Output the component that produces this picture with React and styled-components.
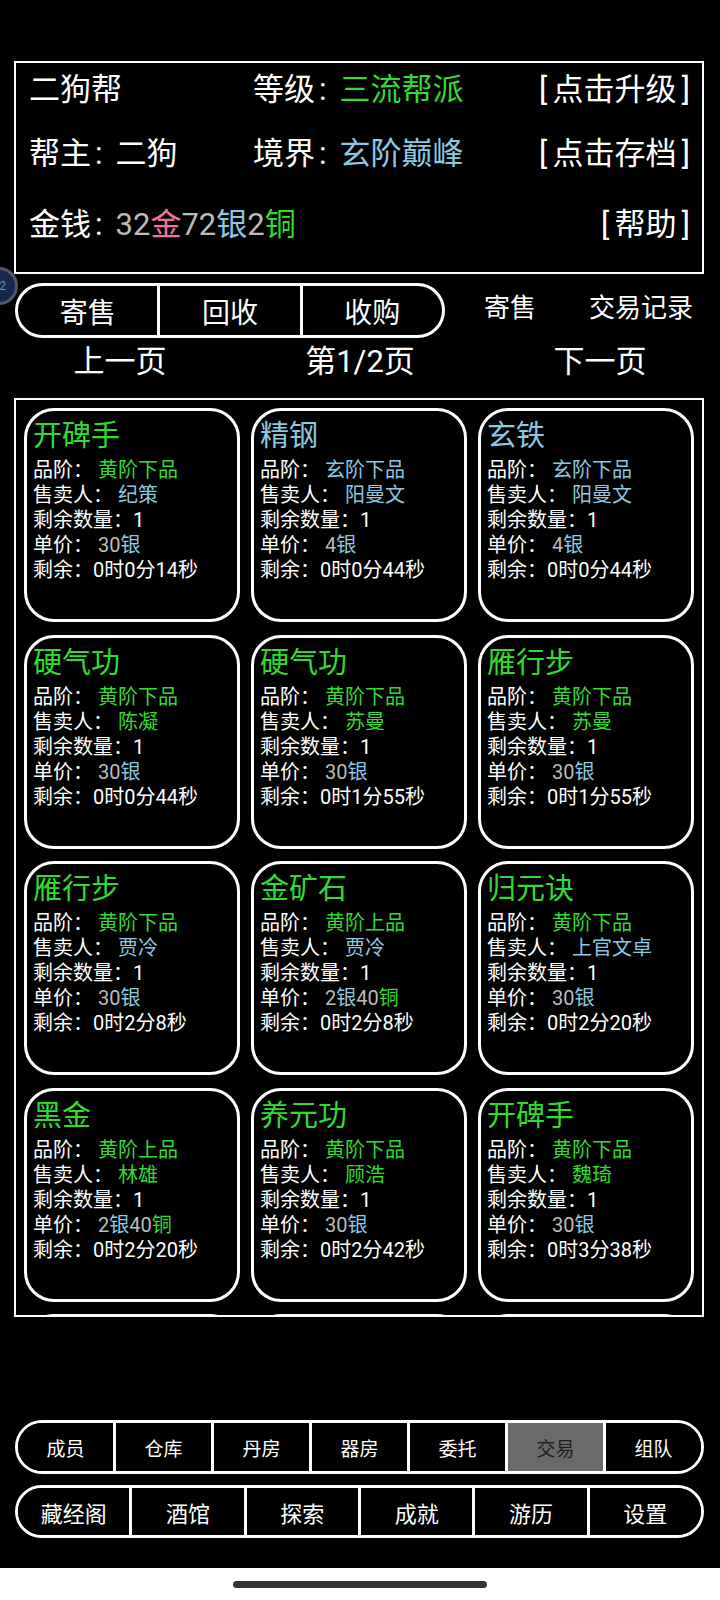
import React from 'react';
import styled, { createGlobalStyle } from 'styled-components';

const GREEN = '#30dc30';
const BLUE = '#8ec8e2';
const GREY = '#bcbcbc';
const PINK = '#f0749a';

const items = [
    { name: '开碑手', nc: GREEN, grade: '黄阶下品', gc: GREEN, seller: '纪策', sc: BLUE, price: [['30', GREY], ['银', BLUE]], left: '0时0分14秒' },
    { name: '精钢', nc: BLUE, grade: '玄阶下品', gc: BLUE, seller: '阳曼文', sc: BLUE, price: [['4', GREY], ['银', BLUE]], left: '0时0分44秒' },
    { name: '玄铁', nc: BLUE, grade: '玄阶下品', gc: BLUE, seller: '阳曼文', sc: BLUE, price: [['4', GREY], ['银', BLUE]], left: '0时0分44秒' },
    { name: '硬气功', nc: GREEN, grade: '黄阶下品', gc: GREEN, seller: '陈凝', sc: GREEN, price: [['30', GREY], ['银', BLUE]], left: '0时0分44秒' },
    { name: '硬气功', nc: GREEN, grade: '黄阶下品', gc: GREEN, seller: '苏曼', sc: GREEN, price: [['30', GREY], ['银', BLUE]], left: '0时1分55秒' },
    { name: '雁行步', nc: GREEN, grade: '黄阶下品', gc: GREEN, seller: '苏曼', sc: GREEN, price: [['30', GREY], ['银', BLUE]], left: '0时1分55秒' },
    { name: '雁行步', nc: GREEN, grade: '黄阶下品', gc: GREEN, seller: '贾冷', sc: BLUE, price: [['30', GREY], ['银', BLUE]], left: '0时2分8秒' },
    { name: '金矿石', nc: GREEN, grade: '黄阶上品', gc: GREEN, seller: '贾冷', sc: BLUE, price: [['2', GREY], ['银', BLUE], ['40', GREY], ['铜', GREEN]], left: '0时2分8秒' },
    { name: '归元诀', nc: GREEN, grade: '黄阶下品', gc: GREEN, seller: '上官文卓', sc: BLUE, price: [['30', GREY], ['银', BLUE]], left: '0时2分20秒' },
    { name: '黑金', nc: GREEN, grade: '黄阶上品', gc: GREEN, seller: '林雄', sc: GREEN, price: [['2', GREY], ['银', BLUE], ['40', GREY], ['铜', GREEN]], left: '0时2分20秒' },
    { name: '养元功', nc: GREEN, grade: '黄阶下品', gc: GREEN, seller: '顾浩', sc: GREEN, price: [['30', GREY], ['银', BLUE]], left: '0时2分42秒' },
    { name: '开碑手', nc: GREEN, grade: '黄阶下品', gc: GREEN, seller: '魏琦', sc: GREEN, price: [['30', GREY], ['银', BLUE]], left: '0时3分38秒' },
    { name: '精钢', nc: BLUE, grade: '玄阶下品', gc: BLUE, seller: '阳曼文', sc: BLUE, price: [['4', GREY], ['银', BLUE]], left: '0时3分50秒' },
    { name: '玄铁', nc: BLUE, grade: '玄阶下品', gc: BLUE, seller: '阳曼文', sc: BLUE, price: [['4', GREY], ['银', BLUE]], left: '0时3分50秒' },
    { name: '硬气功', nc: GREEN, grade: '黄阶下品', gc: GREEN, seller: '苏曼', sc: GREEN, price: [['30', GREY], ['银', BLUE]], left: '0时4分2秒' },
]

const navTop = ['成员', '仓库', '丹房', '器房', '委托', '交易', '组队']
const navBottom = ['藏经阁', '酒馆', '探索', '成就', '游历', '设置']

// bracketed actions in the header have slightly loose brackets
const Action = ({ children }) => <span>[{'\u2006'}{children}{'\u2006'}]</span>

const App = () => {
    return (
        <Screen>
            <GlobalStyle />
            <Badge>22</Badge>
            <Main>
                <InfoBox>
                    <InfoRow $top={7}>
                        <span>二狗帮</span>
                        <span>等级<Colon>:</Colon><Tone $c={GREEN}>三流帮派</Tone></span>
                        <Action>点击升级</Action>
                    </InfoRow>
                    <InfoRow $top={24}>
                        <span>帮主<Colon>:</Colon>二狗</span>
                        <span>境界<Colon>:</Colon><Tone $c={BLUE}>玄阶巅峰</Tone></span>
                        <Action>点击存档</Action>
                    </InfoRow>
                    <InfoRow $top={31}>
                        <span>
                            金钱<Colon>:</Colon><Tone $c={GREY}>32</Tone><Tone $c={PINK}>金</Tone>
                            <Tone $c={GREY}>72</Tone><Tone $c={BLUE}>银</Tone>
                            <Tone $c={GREY}>2</Tone><Tone $c={GREEN}>铜</Tone>
                        </span>
                        <span />
                        <Action>帮助</Action>
                    </InfoRow>
                </InfoBox>

                <TabBar>
                    <SegGroup>
                        <Seg>寄售</Seg>
                        <Seg>回收</Seg>
                        <Seg>收购</Seg>
                    </SegGroup>
                    <SideLinks>
                        <span>寄售</span>
                        <span>交易记录</span>
                    </SideLinks>
                </TabBar>

                <Pager>
                    <span>上一页</span>
                    <span>第1/2页</span>
                    <span>下一页</span>
                </Pager>

                <Market>
                    <CardGrid>
                        {items.map((it, i) => (
                            <Card key={i}>
                                <CardTitle $c={it.nc}>{it.name}</CardTitle>
                                <Line>品阶： <Tone $c={it.gc}>{it.grade}</Tone></Line>
                                <Line>售卖人： <Tone $c={it.sc}>{it.seller}</Tone></Line>
                                <Line>剩余数量：1</Line>
                                <Line>单价： {it.price.map(([t, c], j) => <Tone key={j} $c={c}>{t}</Tone>)}</Line>
                                <Line>剩余：{it.left}</Line>
                            </Card>
                        ))}
                    </CardGrid>
                </Market>

                <NavRow $top={103} $h={54}>
                    {navTop.map((n) => (
                        <NavCell key={n} $size={19} $active={n === '交易'}>{n}</NavCell>
                    ))}
                </NavRow>
                <NavRow $top={11} $h={53}>
                    {navBottom.map((n) => (
                        <NavCell key={n} $size={22}>{n}</NavCell>
                    ))}
                </NavRow>
            </Main>
            <HomeStrip>
                <HomeBar />
            </HomeStrip>
        </Screen>
    )
}

export default App;

const GlobalStyle = createGlobalStyle`
    html, body {
        margin: 0;
        padding: 0;
        background: #000;
    }
    body {
        font-family: Roboto, "Noto Sans CJK SC", sans-serif;
        color: #fff;
    }
    * { box-sizing: border-box; }
`

const Screen = styled.div`
    position: relative;
    width: 720px;
    height: 1600px;
    overflow: hidden;
    background: #000;
`

const Badge = styled.div`
    position: absolute;
    left: -20px;
    top: 267px;
    width: 38px;
    height: 38px;
    border-radius: 50%;
    background: #16294a;
    border: 3px solid #4e5866;
    color: #7d8ba0;
    font-size: 12px;
    line-height: 32px;
    text-align: right;
    padding-right: 9px;
`

const Main = styled.div`
    height: 1568px;
    padding-top: 61px;
`

const InfoBox = styled.div`
    margin-left: 14px;
    width: 690px;
    height: 213px;
    border: 2px solid #fff;
    padding: 0 12px 0 13px;
`

const InfoRow = styled.div`
    display: grid;
    grid-template-columns: 224px 1fr auto;
    height: 40px;
    margin-top: ${(p) => p.$top}px;
    font-size: 31px;
    line-height: 40px;
    white-space: nowrap;
`

const Colon = styled.span`
    margin: 0 13px 0 4px;
`

const Tone = styled.span`
    color: ${(p) => p.$c};
`

const TabBar = styled.div`
    display: flex;
    align-items: center;
    margin: 9px 0 0 15px;
`

const SegGroup = styled.div`
    display: flex;
    width: 430px;
    height: 55px;
    border: 3px solid #fff;
    border-radius: 28px;
    overflow: hidden;
`

const Seg = styled.div`
    flex: 1;
    display: flex;
    align-items: center;
    justify-content: center;
    font-size: 28px;
    & + & {
        border-left: 3px solid #fff;
    }
`

const SideLinks = styled.div`
    display: flex;
    gap: 53px;
    padding: 0 0 5px 39px;
    font-size: 26px;
    line-height: 34px;
`

const Pager = styled.div`
    display: grid;
    grid-template-columns: repeat(3, 240px);
    justify-items: center;
    height: 36px;
    margin-top: 6px;
    font-size: 31px;
    line-height: 36px;
`

const Market = styled.div`
    margin: 18px 0 0 14px;
    width: 690px;
    height: 919px;
    border: 2px solid #fff;
    padding: 8px 8px 0;
    overflow: hidden;
`

const CardGrid = styled.div`
    display: grid;
    grid-template-columns: repeat(3, 216px);
    column-gap: 11px;
    row-gap: 12.5px;
`

const Card = styled.div`
    height: 214px;
    border: 3px solid #fff;
    border-radius: 30px;
    padding: 8px 6px 0;
`

const CardTitle = styled.div`
    color: ${(p) => p.$c};
    font-size: 29px;
    line-height: 34px;
    margin-bottom: 5px;
`

const Line = styled.div`
    font-size: 20px;
    line-height: 25px;
    white-space: nowrap;
`

const NavRow = styled.div`
    display: flex;
    margin: ${(p) => p.$top}px 0 0 15px;
    width: 689px;
    height: ${(p) => p.$h}px;
    border: 3px solid #fff;
    border-radius: 28px;
    overflow: hidden;
`

const NavCell = styled.div`
    flex: 1;
    display: flex;
    align-items: center;
    justify-content: center;
    font-size: ${(p) => p.$size}px;
    background: ${(p) => (p.$active ? '#6a6a6a' : '#000')};
    color: ${(p) => (p.$active ? '#1e1e1e' : '#fff')};
    & + & {
        border-left: 3px solid #fff;
    }
`

const HomeStrip = styled.div`
    height: 32px;
    background: #fff;
    display: flex;
    align-items: center;
    justify-content: center;
`

const HomeBar = styled.div`
    width: 254px;
    height: 7px;
    border-radius: 4px;
    background: #333;
`
